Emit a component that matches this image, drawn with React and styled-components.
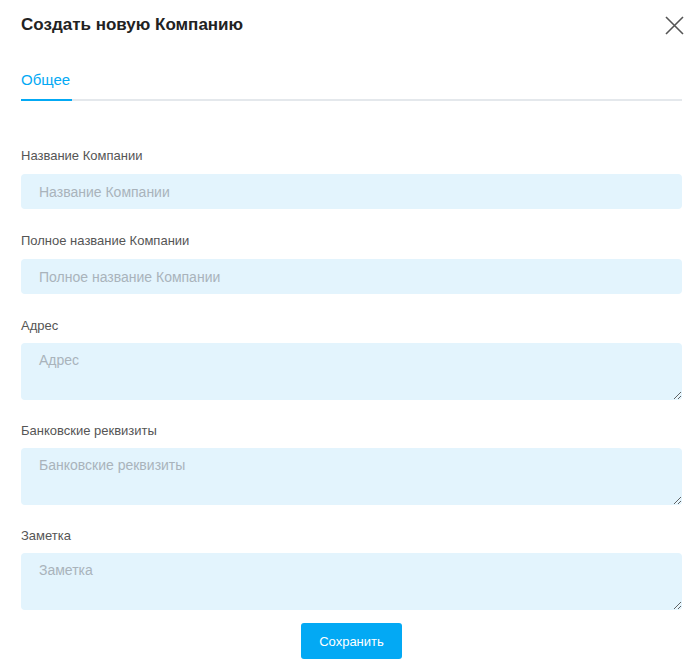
import React from "react";
import styled, { createGlobalStyle } from "styled-components";

const GlobalStyle = createGlobalStyle`
  body {
    margin: 0;
    background: #fff;
    font-family: "Liberation Sans", Arial, sans-serif;
  }
`;

const Modal = styled.div`
  width: 661px;
  padding: 13px 12px 12px 21px;
`;

const Header = styled.div`
  display: flex;
  align-items: center;
  justify-content: space-between;
  height: 24px;
`;

const Title = styled.h2`
  margin: 0;
  font-size: 17px;
  font-weight: 700;
  color: #222;
`;

const CloseButton = styled.button`
  border: 0;
  background: none;
  padding: 0;
  margin-right: -2px;
  width: 20px;
  height: 20px;
  display: flex;
  align-items: center;
  justify-content: center;
  cursor: pointer;
`;

const Tabs = styled.div`
  margin-top: 33px;
  display: flex;
  border-bottom: 2px solid #e4e8ec;
`;

const Tab = styled.div`
  font-size: 15px;
  line-height: 20px;
  color: ${(p) => (p.$active ? "#03a9f4" : "#555")};
  box-shadow: ${(p) => (p.$active ? "inset 0 -2px 0 #03a9f4" : "none")};
  margin-bottom: -2px;
  padding-bottom: 11px;
  width: 51px;
`;

const Form = styled.form`
  margin-top: 47px;
  display: flex;
  flex-direction: column;
  gap: 22px;
`;

const Field = styled.label`
  display: flex;
  flex-direction: column;
  gap: ${(p) => (p.$multi ? "9px" : "10px")};
  margin-bottom: ${(p) => (p.$multi ? "1px" : "2px")};
`;

const Label = styled.span`
  font-size: 13px;
  line-height: 16px;
  color: #555;
`;

const fieldStyles = `
  box-sizing: border-box;
  width: 100%;
  border: 0;
  outline: none;
  border-radius: 4px;
  background: #e3f4fd;
  font-family: "Liberation Sans", Arial, sans-serif;
  font-size: 14px;
  color: #333;
  padding: 0 18px;
  &::placeholder {
    color: #a9b3bb;
  }
`;

const Input = styled.input`
  ${fieldStyles}
  height: 35px;
`;

const TextArea = styled.textarea`
  ${fieldStyles}
  height: 57px;
  padding-top: 9px;
  resize: vertical;
  display: block;
`;

const Footer = styled.div`
  display: flex;
  justify-content: center;
  margin-top: -10px;
`;

const SaveButton = styled.button`
  width: 101px;
  height: 36px;
  border: 0;
  border-radius: 3px;
  background: #03a9f4;
  color: #fff;
  font-family: "Liberation Sans", Arial, sans-serif;
  font-size: 13px;
  cursor: pointer;
`;

const fields = [
  { label: "Название Компании" },
  { label: "Полное название Компании" },
  { label: "Адрес", multi: true },
  { label: "Банковские реквизиты", multi: true },
  { label: "Заметка", multi: true },
];

export default function App() {
  return (
    <>
      <GlobalStyle />
      <Modal>
        <Header>
          <Title>Создать новую Компанию</Title>
          <CloseButton type="button" aria-label="Закрыть">
            <svg width="19" height="19" viewBox="0 0 19 19">
              <path d="M1 1L18 18M18 1L1 18" stroke="#555" strokeWidth="1.6" />
            </svg>
          </CloseButton>
        </Header>
        <Tabs>
          <Tab $active>Общее</Tab>
        </Tabs>
        <Form onSubmit={(e) => e.preventDefault()}>
          {fields.map((f) => (
            <Field key={f.label} $multi={f.multi}>
              <Label>{f.label}</Label>
              {f.multi ? (
                <TextArea placeholder={f.label} />
              ) : (
                <Input placeholder={f.label} />
              )}
            </Field>
          ))}
          <Footer>
            <SaveButton type="submit">Сохранить</SaveButton>
          </Footer>
        </Form>
      </Modal>
    </>
  );
}
